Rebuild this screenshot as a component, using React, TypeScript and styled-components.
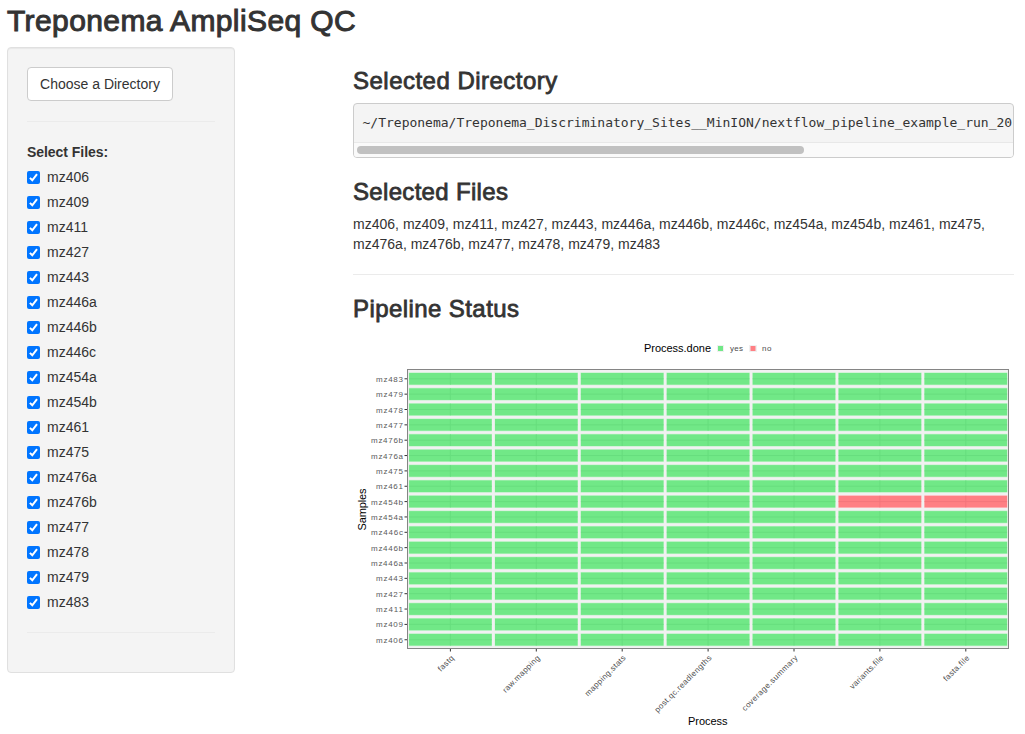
import React from 'react';
import styled, { createGlobalStyle } from 'styled-components';

const files = [
  'mz406', 'mz409', 'mz411', 'mz427', 'mz443', 'mz446a', 'mz446b', 'mz446c', 'mz454a',
  'mz454b', 'mz461', 'mz475', 'mz476a', 'mz476b', 'mz477', 'mz478', 'mz479', 'mz483',
];

const processes = [
  { name: 'fastq', width: 19 },
  { name: 'raw.mapping', width: 49 },
  { name: 'mapping.stats', width: 54 },
  { name: 'post.qc.readlengths', width: 77 },
  { name: 'coverage.summary', width: 75 },
  { name: 'variants.file', width: 44 },
  { name: 'fasta.file', width: 33 },
];

const notDone = new Set(['mz454b/variants.file', 'mz454b/fasta.file']);

const GlobalStyle = createGlobalStyle`
  *, *::before, *::after { box-sizing: border-box; }
  body {
    margin: 0;
    background: #fff;
    color: #333;
    font: 14px/20px "Liberation Sans", Arial, sans-serif;
    overflow: hidden;
  }
`;

const Page = styled.div`
  width: 1025px;
  height: 734px;
  padding: 4px 11px 0 7px;
  overflow: hidden;
`;

const Title = styled.h1`
  margin: 0 0 10px;
  font-size: 30px;
  line-height: 33px;
  font-weight: 400;
  letter-spacing: 0.4px;
  white-space: nowrap;
  -webkit-text-stroke: 1px #333;
`;

const Columns = styled.div`
  display: grid;
  grid-template-columns: 228px 661px;
  column-gap: 118px;
  align-items: start;
`;

const Sidebar = styled.aside`
  height: 626px;
  padding: 19px;
  border: 1px solid #e0e0e0;
  border-radius: 4px;
  background: #f4f4f4;
  box-shadow: inset 0 1px 1px rgba(0, 0, 0, 0.05);
`;

const Button = styled.button`
  display: block;
  width: 146px;
  height: 34px;
  padding: 0;
  border: 1px solid #ccc;
  border-radius: 4px;
  background: #fff;
  color: #333;
  font: inherit;
  white-space: nowrap;
`;

const Rule = styled.hr<{ $top: number; $bottom: number }>`
  height: 1px;
  margin: ${(p) => p.$top}px 0 ${(p) => p.$bottom}px;
  border: 0;
  background: #ebebeb;
`;

const GroupLabel = styled.div`
  margin-bottom: 5px;
  font-weight: 700;
  letter-spacing: -0.05px;
`;

const FileList = styled.div`
  display: flex;
  flex-direction: column;
  gap: 5px;
`;

const FileRow = styled.label`
  display: flex;
  align-items: center;
  gap: 7px;
  height: 20px;

  svg { display: block; margin-top: 1px; }
`;

const Main = styled.main`
  padding-top: 21px;
`;

const Heading = styled.h3<{ $spacing: number }>`
  margin: 0;
  font-size: 24px;
  line-height: 26px;
  font-weight: 400;
  letter-spacing: ${(p) => p.$spacing}px;
  white-space: nowrap;
  -webkit-text-stroke: 0.8px #333;
`;

const PathBox = styled.div`
  height: 55px;
  margin: 9px 0 21px;
  border: 1px solid #ccc;
  border-radius: 4px;
  background: #f4f4f4;
  overflow: hidden;
`;

const PathText = styled.div`
  height: 38px;
  padding: 9px 0 0 8.5px;
  font: 13px/20px "DejaVu Sans Mono", monospace;
  white-space: nowrap;
  overflow: hidden;
`;

const Track = styled.div`
  height: 15px;
  padding: 4px 3px;
  border-top: 1px solid #e8e8e8;
  background: #fafafa;
`;

const Thumb = styled.div`
  width: 447px;
  height: 8px;
  margin-top: -1px;
  border-radius: 4px;
  background: #c1c1c1;
`;

const FilesText = styled.div`
  margin-top: 9px;
  letter-spacing: 0.012px;
`;

const Chart = styled.svg`
  display: block;
  margin-top: 4px;
  font-family: "Liberation Sans", Arial, sans-serif;
`;

const Check = () => (
  <svg width="13" height="13" viewBox="0 0 13 13">
    <rect width="13" height="13" rx="2" fill="#0075ff" />
    <path d="M2.9 6.9 5.3 9.3 10 3.1" fill="none" stroke="#fff" strokeWidth="2" />
  </svg>
);

const samples = [...files].reverse();
const rowStep = 15.35;
const colStep = 85.9;
const firstCol = 450.4;

function StatusChart() {
  return (
    <Chart width="661" height="408" viewBox="353 326 661 408">
      <text x="644" y="352" fontSize="11" fill="#000" textLength="67">Process.done</text>
      <rect x="717" y="345" width="7" height="7" fill="#f0f0f0" />
      <rect x="718" y="346" width="5" height="5" fill="#71e887" />
      <text x="730" y="351" fontSize="8" fill="#4d4d4d" textLength="13">yes</text>
      <rect x="749" y="345" width="8" height="7" fill="#f0f0f0" />
      <rect x="750.5" y="346" width="5" height="5" fill="#ff7f84" />
      <text x="762" y="351" fontSize="8" fill="#4d4d4d" textLength="9.5">no</text>

      <rect x="407.5" y="369.5" width="601" height="279" fill="#f1f1f1" />
      {samples.map((sample, r) => {
        const cy = 378.8 + r * rowStep;
        return (
          <g key={sample}>
            {processes.map((process, c) => {
              const cx = firstCol + c * colStep;
              const failed = notDone.has(`${sample}/${process.name}`);
              return (
                <g key={process.name}>
                  <rect x={cx - 41.6} y={cy - 6.4} width="83.2" height="12.8" fill={failed ? '#ffcccf' : '#c0f2c9'} />
                  <rect x={cx - 41.3} y={cy - 5.8} width="82.6" height="11.6" fill={failed ? '#ff7f84' : '#71e887'} />
                  <path
                    d={`M${cx - 41.3} ${cy}H${cx + 41.3}M${cx} ${cy - 5.8}V${cy + 5.8}`}
                    stroke={failed ? '#f3747a' : '#67dc7d'}
                    strokeWidth="0.9"
                  />
                </g>
              );
            })}
            <path d={`M404.5 ${cy}H407`} stroke="#333" strokeWidth="1" />
            <text
              x={sample.length > 5 ? 371 : 376}
              y={cy + 3}
              fontSize="8"
              fill="#5a5a5a"
              textLength={sample.length > 5 ? 32 : 27}
            >
              {sample}
            </text>
          </g>
        );
      })}
      <rect x="407.5" y="369.5" width="601" height="279" fill="none" stroke="#858585" />

      {processes.map((process, c) => {
        const cx = firstCol + c * colStep;
        return (
          <g key={process.name}>
            <path d={`M${cx} 649V651.5`} stroke="#333" />
            <text
              transform={`translate(${cx + 4} 658.5) rotate(-45)`}
              fontSize="8"
              fill="#4d4d4d"
              textAnchor="end"
              textLength={process.width}
            >
              {process.name}
            </text>
          </g>
        );
      })}
      <text x="688" y="725" fontSize="11" fill="#000" textLength="39.5">Process</text>
      <text transform="translate(366 530.5) rotate(-90)" fontSize="11" fill="#000" textLength="42">Samples</text>
    </Chart>
  );
}

export default function App() {
  return (
    <>
      <GlobalStyle />
      <Page>
        <Title>Treponema AmpliSeq QC</Title>
        <Columns>
          <Sidebar>
            <Button>Choose a Directory</Button>
            <Rule $top={20} $bottom={20} />
            <GroupLabel>Select Files:</GroupLabel>
            <FileList>
              {files.map((file) => (
                <FileRow key={file}>
                  <Check />
                  {file}
                </FileRow>
              ))}
            </FileList>
            <Rule $top={20} $bottom={0} />
          </Sidebar>
          <Main>
            <Heading $spacing={0.48}>Selected Directory</Heading>
            <PathBox>
              <PathText>~/Treponema/Treponema_Discriminatory_Sites__MinION/nextflow_pipeline_example_run_20</PathText>
              <Track>
                <Thumb />
              </Track>
            </PathBox>
            <Heading $spacing={0.32}>Selected Files</Heading>
            <FilesText>{files.join(', ')}</FilesText>
            <Rule $top={20} $bottom={21} />
            <Heading $spacing={0.42}>Pipeline Status</Heading>
            <StatusChart />
          </Main>
        </Columns>
      </Page>
    </>
  );
}
